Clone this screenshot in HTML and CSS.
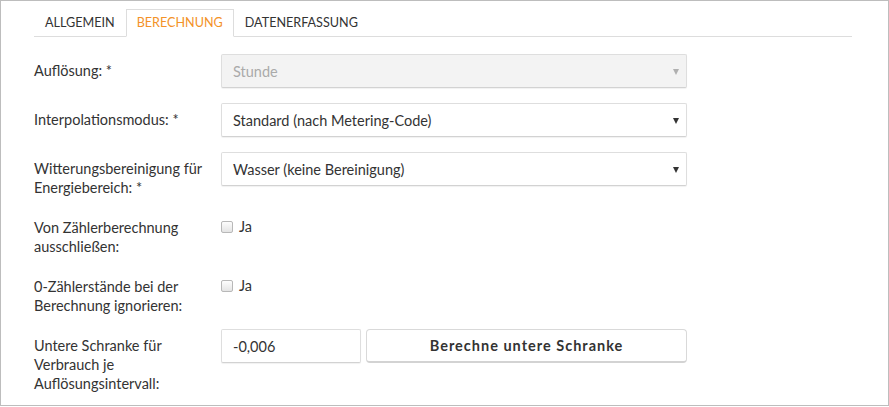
FILE: index.html
```html
<!DOCTYPE html>
<html lang="de">
<head>
<meta charset="utf-8">
<title>Berechnung</title>
<link rel="stylesheet" href="styles.css">
</head>
<body>
<div class="frame">
  <ul class="tabs">
    <li class="tab">ALLGEMEIN</li>
    <li class="tab active">BERECHNUNG</li>
    <li class="tab">DATENERFASSUNG</li>
  </ul>
  <form class="form">
    <div class="row">
      <label class="lbl">Auflösung: *</label>
      <div class="select disabled">Stunde<span class="caret"></span></div>
    </div>
    <div class="row">
      <label class="lbl">Interpolationsmodus: *</label>
      <div class="select">Standard (nach Metering-Code)<span class="caret"></span></div>
    </div>
    <div class="row">
      <label class="lbl">Witterungsbereinigung für Energiebereich: *</label>
      <div class="select">Wasser (keine Bereinigung)<span class="caret"></span></div>
    </div>
    <div class="row">
      <label class="lbl">Von Zählerberechnung ausschließen:</label>
      <label class="check"><input type="checkbox" class="box">Ja</label>
    </div>
    <div class="row">
      <label class="lbl">0-Zählerstände bei der Berechnung ignorieren:</label>
      <label class="check"><input type="checkbox" class="box">Ja</label>
    </div>
    <div class="row">
      <label class="lbl">Untere Schranke für Verbrauch je Auflösungsintervall:</label>
      <div class="inline">
        <input class="text" type="text" value="-0,006">
        <button class="btn" type="button">Berechne untere Schranke</button>
      </div>
    </div>
  </form>
</div>
</body>
</html>
```
FILE: styles.css
```css
* { box-sizing: border-box; }
html, body { margin: 0; padding: 0; background: #fff; }
body {
  font-family: Lato, "Open Sans", "Liberation Sans", sans-serif;
  font-size: 14.5px;
  color: #333;
}
.frame {
  width: 889px;
  height: 406px;
  border: 1px solid #bdbdbd;
  padding: 8px 36px 0 33px;
  overflow: hidden;
}
.tabs {
  list-style: none;
  margin: 0;
  padding: 0;
  display: flex;
  border-bottom: 1px solid #ddd;
}
.tab {
  border: 1px solid transparent;
  margin-bottom: -1px;
  padding: 0 10px;
  line-height: 26px;
  font-size: 12.6px;
  color: #333;
}
.tab.active {
  border-color: #ddd;
  border-bottom-color: #fff;
  background: #fff;
  color: #f39228;
}
.form { margin-top: 17px; }
.row {
  display: grid;
  grid-template-columns: 187px 466px;
  align-items: start;
  margin-bottom: 15px;
}
.lbl {
  padding: 7px 12px 0 0;
  line-height: 19px;
  margin-bottom: -1px;
}
.select {
  position: relative;
  height: 34px;
  border: 1px solid #dedede;
  border-bottom-color: #d2d2d2;
  border-radius: 2px;
  box-shadow: 0 1px 1px rgba(0,0,0,0.06);
  padding: 1px 30px 0 11px;
  line-height: 32px;
  background: #fff;
}
.select.disabled { background: #f3f3f3; color: #aaa; }
.caret {
  position: absolute;
  right: 7px;
  top: 14px;
  border-left: 3px solid transparent;
  border-right: 3px solid transparent;
  border-top: 6px solid #333;
}
.select.disabled .caret { border-top-color: #b0b0b0; }
.check {
  display: flex;
  align-items: center;
  padding-top: 6px;
  line-height: 19px;
}
.box {
  appearance: none;
  -webkit-appearance: none;
  width: 12px;
  height: 12px;
  margin: 0 6px 0 0;
  border: 1px solid #b8b8b8;
  border-radius: 2px;
  background: linear-gradient(#fdfdfd, #e4e4e4);
}
.inline { display: flex; gap: 5px; }
.text {
  width: 140px;
  height: 34px;
  border: 1px solid #dedede;
  border-bottom-color: #d2d2d2;
  border-radius: 2px;
  padding: 0 11px;
  font: inherit;
  color: #333;
  box-shadow: 0 1px 1px rgba(0,0,0,0.06);
}
.btn {
  width: 321px;
  height: 34px;
  border: 1px solid #d9d9d9;
  border-bottom: 2px solid #d3d3d3;
  border-radius: 4px;
  background: #fff;
  font-family: inherit;
  font-size: 14.5px;
  font-weight: bold;
  letter-spacing: 1px;
  color: #333;
}
```
